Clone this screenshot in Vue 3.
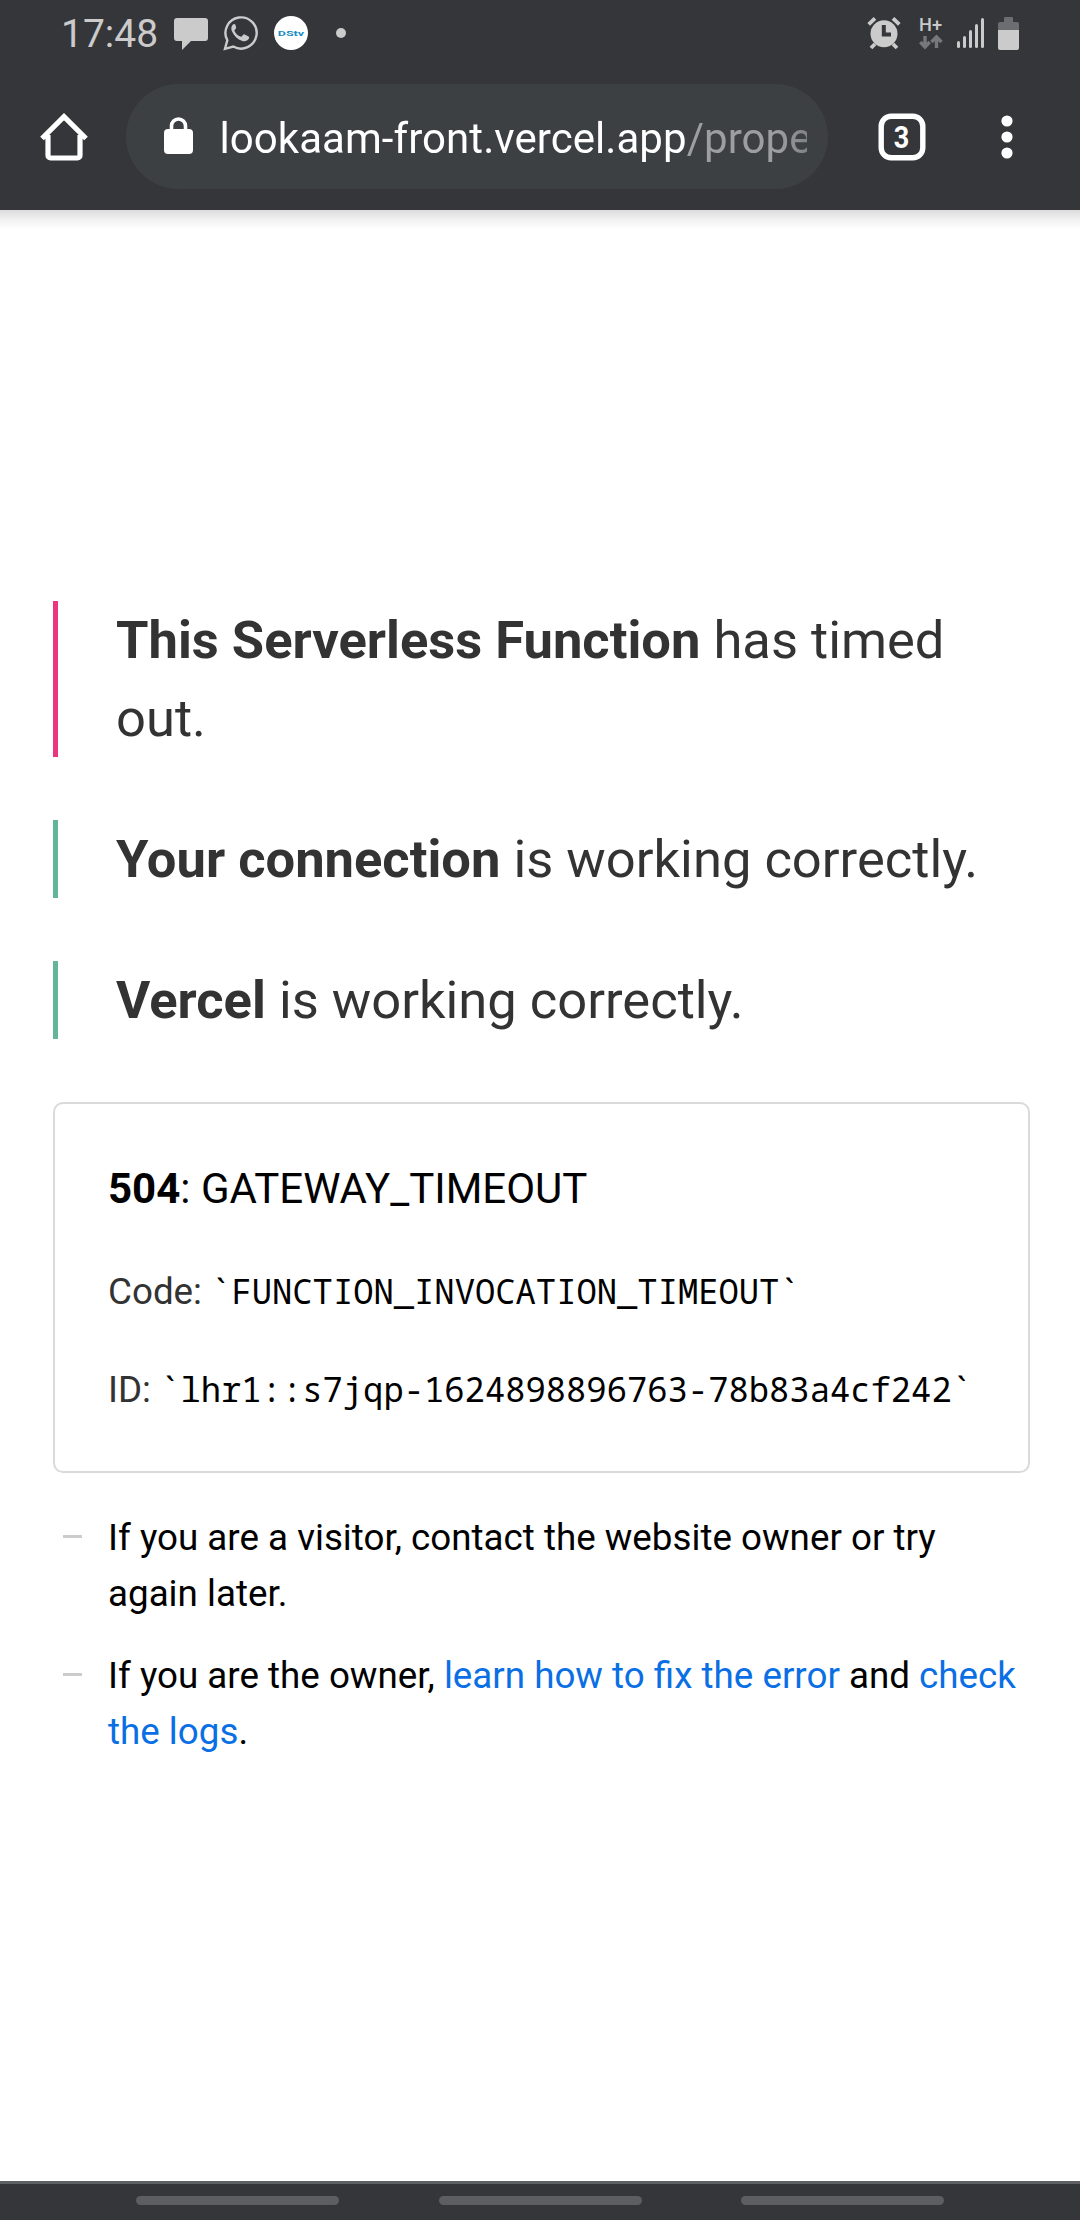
<script setup>
import { ref } from 'vue'

const time = ref('17:48')
const tab_count = ref(3)
const host = ref('lookaam-front.vercel.app')
const path = ref('/prope')

const notes = [ // status lines, left border color depends on type
  { type: 'error', strong: 'This Serverless Function', text: ' has timed out.' },
  { type: 'success', strong: 'Your connection', text: ' is working correctly.' },
  { type: 'success', strong: 'Vercel', text: ' is working correctly.' },
]
const code = '`FUNCTION_INVOCATION_TIMEOUT`'
const id = '`lhr1::s7jqp-1624898896763-78b83a4cf242`'
const signal = [7, 12, 18, 24, 30] // bar heights
</script>

<template>
  <div class="screen">
    <header>
      <div class="status">
        <span class="time">{{ time }}</span>
        <svg class="chat" width="34" height="34" viewBox="0 0 34 34">
          <path d="M3 2h28a3 3 0 0 1 3 3v17a3 3 0 0 1-3 3H17L8 34V25H3a3 3 0 0 1-3-3V5a3 3 0 0 1 3-3z" fill="#cbcbcb" />
        </svg>
        <svg class="whatsapp" width="36" height="36" viewBox="0 0 36 36">
          <path d="M2 33.800L4.300 25.300A15.600 15.600 0 1 1 10.300 31.500Z" fill="none" stroke="#cbcbcb" stroke-width="2.400" />
          <path d="M12.300 9.600c-.5-.8-1.600-.8-2.400 0-1.700 1.700-2 4-1.100 6.300 2 4.700 5.700 8.400 10.500 10.100 2.600.8 5.200 0 6.500-2.200.5-1 .4-2-.2-2.400l-4-2c-.6-.3-1.100-.1-1.500.4l-1.300 1.600c-.4.400-.8.400-1.300.2-2.700-1.200-4.600-3-5.900-5.400-.3-.5-.2-.9.2-1.300l1.100-1.400c.3-.4.3-.8.2-1.200z" fill="#cbcbcb" />
        </svg>
        <svg class="dstv" width="34" height="34" viewBox="0 0 34 34">
          <circle cx="17" cy="17" r="17" fill="#fff" />
          <text x="3.800" y="19.800" textLength="26.400" lengthAdjust="spacingAndGlyphs">DStv</text>
        </svg>
        <span class="dot"></span>
        <span class="grow"></span>
        <svg class="alarm" width="34" height="34" viewBox="0 0 34 34">
          <path d="M1.700 8.300L8 2.300M26 2.300l6.300 6M8 28l-4 4M26 28l4 4" stroke="#cbcbcb" stroke-width="3.800" />
          <circle cx="17" cy="17.700" r="13.500" fill="#cbcbcb" />
          <path d="M16.800 9v9.500h7.200" fill="none" stroke="#35363a" stroke-width="4" />
        </svg>
        <svg class="network" width="26" height="34" viewBox="0 0 26 34">
          <text x="0" y="15" textLength="23" lengthAdjust="spacingAndGlyphs">H+</text>
          <path d="M6 20v10M1.300 26L6 31l4.700-5M17.500 32V21M12.500 26l5-5 5 5" fill="none" stroke="#77787b" stroke-width="3.400" />
        </svg>
        <div class="signal">
          <i v-for="h in signal" :key="h" :style="{ height: h + 'px' }"></i>
        </div>
        <svg class="battery" width="21" height="33" viewBox="0 0 21 33">
          <path d="M6 1a1 1 0 0 1 1-1h7a1 1 0 0 1 1 1v4h4a2 2 0 0 1 2 2v6H0V7a2 2 0 0 1 2-2h4z" fill="#6c6d70" />
          <path d="M0 13h21v18a2 2 0 0 1-2 2H2a2 2 0 0 1-2-2z" fill="#cbcbcb" />
        </svg>
      </div>

      <div class="toolbar">
        <svg class="home" width="48" height="48" viewBox="0 0 48 48">
          <path d="M2 25.500L24 3.700l22 21.800M8 22v20.500a2.500 2.500 0 0 0 2.500 2.500h27a2.500 2.500 0 0 0 2.500-2.500V22" fill="none" stroke="#fff" stroke-width="5.200" />
        </svg>
        <div class="omnibox">
          <svg class="lock" width="29" height="37" viewBox="0 0 29 37">
            <path d="M7.500 14V9a7 7 0 0 1 14 0V14" fill="none" stroke="#fff" stroke-width="3.600" />
            <rect y="12" width="29" height="25" rx="4" fill="#fff" />
          </svg>
          <div class="url">{{ host }}<span>{{ path }}</span></div>
        </div>
        <svg class="tabs" width="48" height="48" viewBox="0 0 48 48">
          <rect x="3.200" y="3.200" width="41.600" height="41.600" rx="10" fill="none" stroke="#fff" stroke-width="5.400" />
          <text x="15.700" y="34.800" textLength="15.500" lengthAdjust="spacingAndGlyphs">{{ tab_count }}</text>
        </svg>
        <svg class="menu" width="12" height="44" viewBox="0 0 12 44">
          <circle cx="6" cy="6" r="5.600" />
          <circle cx="6" cy="22" r="5.600" />
          <circle cx="6" cy="38" r="5.600" />
        </svg>
      </div>
    </header>

    <main>
      <p v-for="note in notes" :key="note.strong" class="note" :class="note.type">
        <strong>{{ note.strong }}</strong>{{ note.text }}
      </p>
      <div class="devinfo">
        <p class="title"><strong>504</strong>: GATEWAY_TIMEOUT</p>
        <p>Code: <code>{{ code }}</code></p>
        <p>ID: <code>{{ id }}</code></p>
      </div>
      <ul>
        <li>If you are a visitor, contact the website owner or try again later.</li>
        <li>If you are the owner, <a>learn how to fix the error</a> and <a>check the logs</a>.</li>
      </ul>
    </main>

    <footer>
      <i></i>
      <i></i>
      <i></i>
    </footer>
  </div>
</template>

<style>
body {
  margin: 0;
  background: #fff;
}
</style>

<style scoped>
.screen {
  display: flex;
  flex-direction: column;
  box-sizing: border-box;
  width: 1080px;
  height: 2220px;
  overflow: hidden;
  background: #fff;
  font-family: Roboto, "Noto Sans", sans-serif;
}

svg {
  display: block;
  flex: none;
}

p,
ul {
  margin: 0;
  padding: 0;
}

header {
  height: 210px;
  flex: none;
  background: #35363a;
}

.status {
  display: flex;
  align-items: center;
  box-sizing: border-box;
  height: 63px;
  padding: 3px 61px 0 61px;
}

.time {
  width: 113px;
  font-size: 39px;
  line-height: 46px;
  margin-top: 2px;
  color: #cbcbcb;
}

.whatsapp,
.dstv {
  margin-left: 15px;
}

.dstv text {
  font: bold 8px Roboto, sans-serif;
  fill: #1a8cc4;
}

.dot {
  width: 10px;
  height: 10px;
  margin-left: 28px;
  border-radius: 50%;
  background: #cbcbcb;
}

.grow {
  flex: 1;
}

.network {
  margin-left: 18px;
}

.network text {
  font: 500 19px Roboto, sans-serif;
  fill: #cbcbcb;
}

.signal {
  display: flex;
  align-items: flex-end;
  gap: 3px;
  height: 30px;
  margin-left: 12px;
}

.signal i {
  width: 3px;
  border-radius: 1.5px;
  background: #cbcbcb;
}

.battery {
  margin-left: 14px;
}

.toolbar {
  display: flex;
  align-items: center;
  height: 147px;
  padding: 0 67px 0 39.5px;
}

.omnibox {
  display: flex;
  align-items: center;
  box-sizing: border-box;
  width: 702px;
  height: 105px;
  margin-left: 38.5px;
  padding: 0 21px 0 38px;
  border-radius: 53px;
  background: #3c4043;
}

.url {
  flex: 1;
  margin-top: 4px;
  margin-left: 26.5px;
  overflow: hidden;
  white-space: nowrap;
  font-size: 42px;
  line-height: 60px;
  letter-spacing: 0.06px;
  color: #fff;
  mask-image: linear-gradient(to right, #000 95%, rgba(0, 0, 0, 0.7));
}

.url span {
  color: #9d9ea0;
}

.lock {
  margin-top: -2px;
}

.tabs {
  margin-left: 50px;
}

.tabs text {
  font: bold 32px Roboto, sans-serif;
  fill: #fff;
}

.menu {
  margin-left: auto;
  fill: #fff;
}

main {
  flex: 1;
  padding: 391px 50px 0 53px;
  /* toolbar shadow */
  background: linear-gradient(#dcdcdc, #f2f2f2 10px, #fff 20px) no-repeat 0 0 / 100% 20px;
}

.note {
  margin-bottom: 63px;
  padding-left: 58px;
  border-left: 5px solid;
  font-size: 52.5px;
  line-height: 78px;
  color: #333;
}

.note.error {
  border-color: #eb367f;
}

.note.success {
  border-color: #62b599;
}

.devinfo {
  box-sizing: border-box;
  width: 977px;
  height: 371px;
  padding: 53px 0 0 53px;
  border: 2px solid #dadada;
  border-radius: 10px;
  color: #333;
  font-size: 36.75px;
  line-height: 55px;
}

.devinfo p {
  height: 55px;
  margin-bottom: 43px;
  white-space: nowrap;
}

.devinfo .title {
  height: 63px;
  margin-bottom: 44px;
  font-size: 42px;
  line-height: 63px;
  color: #000;
}

.note.error {
  color: #333;
  border-color: #eb367f;
}

.note.success {
  color: #333;
  border-color: #62b599;
}

code {
  font-family: "Droid Sans Mono", "Noto Sans Mono", "DejaVu Sans Mono", monospace;
  font-size: 33.85px;
  line-height: 1;
  color: #000;
}

ul {
  margin-top: 36.5px;
  list-style: none;
  font-size: 36.75px;
  line-height: 56px;
  color: #000;
}

li {
  position: relative;
  margin-bottom: 26px;
  padding-left: 55px;
}

/* dash marker */
li::before {
  content: "";
  position: absolute;
  left: 10px;
  top: 25px;
  width: 19px;
  height: 3px;
  background: #ccc;
}

a {
  color: #0a6fe4;
}

footer {
  display: flex;
  justify-content: center;
  gap: 99.5px;
  box-sizing: border-box;
  height: 39px;
  flex: none;
  padding-top: 12px;
  border-top: 3px solid #5f6063;
  background: #35363a;
}

footer i {
  width: 203px;
  height: 9px;
  border-radius: 5px;
  background: #5d5e62;
}
</style>
